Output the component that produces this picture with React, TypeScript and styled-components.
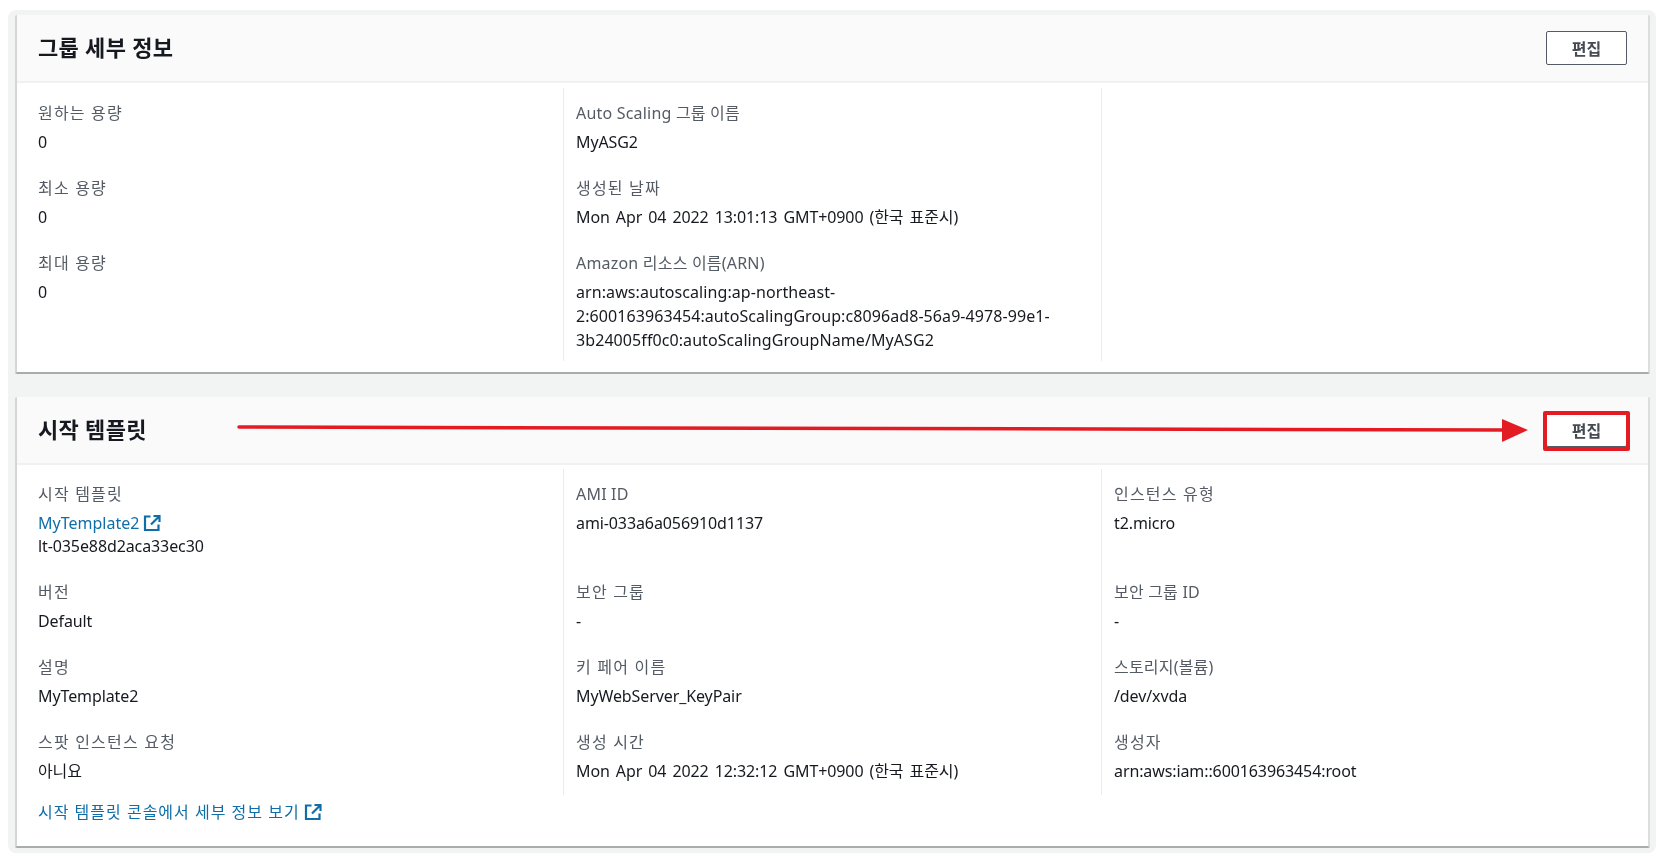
import React from "react";
import styled, { createGlobalStyle } from "styled-components";

const Global = createGlobalStyle`
  html, body { margin: 0; padding: 0; background: #fff; }
  body { font-family: "Noto Sans", "Noto Sans CJK KR", sans-serif; font-size: 16px; color: #16191f; }
  * { box-sizing: border-box; }
`;

const Page = styled.div`
  width: 1661px;
  height: 853px;
  padding: 10px 5px 0 8px;
  overflow: hidden;
  filter: blur(0.35px);
`;
const Canvas = styled.main`
  height: 843px;
  padding: 5px 6px 5px 7px;
  background: #f2f3f3;
  border-radius: 8px;
  display: flex;
  flex-direction: column;
  gap: 23px;
`;
const Panel = styled.section`
  position: relative;
  background: #fff;
  border-left: 2px solid #d4d6d6;
  border-right: 2px solid #dcdede;
  border-bottom: 2px solid #a8acac;
  border-radius: 2px;
`;
const Header = styled.header`
  height: 68px;
  padding: 0 21px 0 21px;
  display: flex;
  align-items: center;
  justify-content: space-between;
  background: #fafafa;
  border-bottom: 2px solid #f0f1f1;
`;
const Title = styled.h2`
  margin: 0 0 2px;
  font-size: 22px;
  line-height: 28px;
  letter-spacing: 0.3px;
  font-weight: 700;
  color: #16191f;
`;
const EditButton = styled.button`
  width: 81px;
  height: 34px;
  padding: 0;
  background: #fff;
  border: 1.5px solid #545b64;
  border-radius: 2px;
  font-family: inherit;
  font-size: 16px;
  font-weight: 700;
  color: #444b53;
`;
const Grid = styled.div<{ $pt: number; $pb: number }>`
  display: grid;
  grid-template-columns: 525px 538px 1fr;
  padding: ${(p) => p.$pt}px 21px ${(p) => p.$pb}px 21px;
`;
const Column = styled.div<{ $pb: number }>`
  padding: 14px 12px ${(p) => p.$pb}px 0;
  & + & {
    padding-left: 12px;
    border-left: 1px solid #eaeded;
  }
`;
const Field = styled.div`
  margin-bottom: 23px;
  &:last-child { margin-bottom: 0; }
`;
const Label = styled.div<{ $ko?: boolean }>`
  font-size: 16px;
  line-height: 22px;
  letter-spacing: ${(p) => (p.$ko ? "1.2px" : "0.2px")};
  white-space: nowrap;
  color: #545b64;
`;
const Value = styled.div`
  margin-top: 6px;
  font-size: 16px;
  line-height: 24px;
  letter-spacing: -0.1px;
  word-spacing: 2px;
  white-space: nowrap;
  color: #16191f;
`;
const ArnValue = styled(Value)`
  letter-spacing: 0.08px;
`;
const Line = styled.div`
  line-height: 23px;
  color: #16191f;
`;
const Link = styled.a`
  display: inline-flex;
  align-items: center;
  gap: 4px;
  font-size: 16px;
  line-height: 24px;
  letter-spacing: 0;
  color: #0f6ea8;
  text-decoration: none;
`;
const FooterLink = styled(Link)`
  letter-spacing: 1px;
`;
const Footer = styled.div`
  padding: 5px 21px 22px 21px;
`;
const RedBox = styled.div`
  position: absolute;
  left: 1526px;
  top: 14px;
  width: 87px;
  height: 40px;
  border: 4px solid #e31b23;
  border-radius: 2px;
`;
const Arrow = styled.svg`
  position: absolute;
  left: 0;
  top: 0;
  pointer-events: none;
`;

const External = () => (
  <svg width="18" height="18" viewBox="0 0 18 18" fill="none" stroke="#0f6ea8" strokeWidth="2.2">
    <path d="M7.5 2.5H2v13.5h13.5v-5.5" />
    <path d="M10.5 2h6v6M16 2.5L8 10.5" />
  </svg>
);

type F = { label: string; value?: React.ReactNode; ko?: boolean };
const FieldView = ({ label, value, ko = true }: F) => (
  <Field>
    <Label $ko={ko}>{label}</Label>
    <Value>{value}</Value>
  </Field>
);

export default function App() {
  return (
    <Page>
      <Global />
      <Canvas>
        <Panel>
          <Header>
            <Title>그룹 세부 정보</Title>
            <EditButton>편집</EditButton>
          </Header>
          <Grid $pt={5} $pb={11}>
            <Column $pb={9}>
              <FieldView label="원하는 용량" value="0" />
              <FieldView label="최소 용량" value="0" />
              <FieldView label="최대 용량" value="0" />
            </Column>
            <Column $pb={9}>
              <FieldView ko={false} label="Auto Scaling 그룹 이름" value="MyASG2" />
              <FieldView label="생성된 날짜" value="Mon Apr 04 2022 13:01:13 GMT+0900 (한국 표준시)" />
              <Field>
                <Label>Amazon 리소스 이름(ARN)</Label>
                <ArnValue>
                  arn:aws:autoscaling:ap-northeast-
                  <br />
                  2:600163963454:autoScalingGroup:c8096ad8-56a9-4978-99e1-
                  <br />
                  3b24005ff0c0:autoScalingGroupName/MyASG2
                </ArnValue>
              </Field>
            </Column>
            <Column $pb={9} />
          </Grid>
        </Panel>
        <Panel>
          <Header>
            <Title>시작 템플릿</Title>
            <EditButton>편집</EditButton>
          </Header>
          <Grid $pt={4} $pb={0}>
            <Column $pb={12}>
              <Field>
                <Label $ko>시작 템플릿</Label>
                <Value>
                  <Link href="#">
                    MyTemplate2 <External />
                  </Link>
                  <Line>lt-035e88d2aca33ec30</Line>
                </Value>
              </Field>
              <FieldView label="버전" value="Default" />
              <FieldView label="설명" value="MyTemplate2" />
              <FieldView label="스팟 인스턴스 요청" value="아니요" />
            </Column>
            <Column $pb={12}>
              <Field>
                <Label>AMI ID</Label>
                <Value>
                  ami-033a6a056910d1137
                  <Line>&nbsp;</Line>
                </Value>
              </Field>
              <FieldView label="보안 그룹" value="-" />
              <FieldView label="키 페어 이름" value="MyWebServer_KeyPair" />
              <FieldView label="생성 시간" value="Mon Apr 04 2022 12:32:12 GMT+0900 (한국 표준시)" />
            </Column>
            <Column $pb={12}>
              <Field>
                <Label $ko>인스턴스 유형</Label>
                <Value>
                  t2.micro
                  <Line>&nbsp;</Line>
                </Value>
              </Field>
              <FieldView ko={false} label="보안 그룹 ID" value="-" />
              <FieldView ko={false} label="스토리지(볼륨)" value="/dev/xvda" />
              <FieldView label="생성자" value="arn:aws:iam::600163963454:root" />
            </Column>
          </Grid>
          <Footer>
            <FooterLink href="#">
              시작 템플릿 콘솔에서 세부 정보 보기 <External />
            </FooterLink>
          </Footer>
          <RedBox />
          <Arrow width="1640" height="60" viewBox="0 0 1640 60">
            <path d="M222 30L1490 33" stroke="#e31b23" strokeWidth="3.5" strokeLinecap="round" />
            <path d="M1485 22L1511 33L1485 45Z" fill="#e31b23" />
          </Arrow>
        </Panel>
      </Canvas>
    </Page>
  );
}
